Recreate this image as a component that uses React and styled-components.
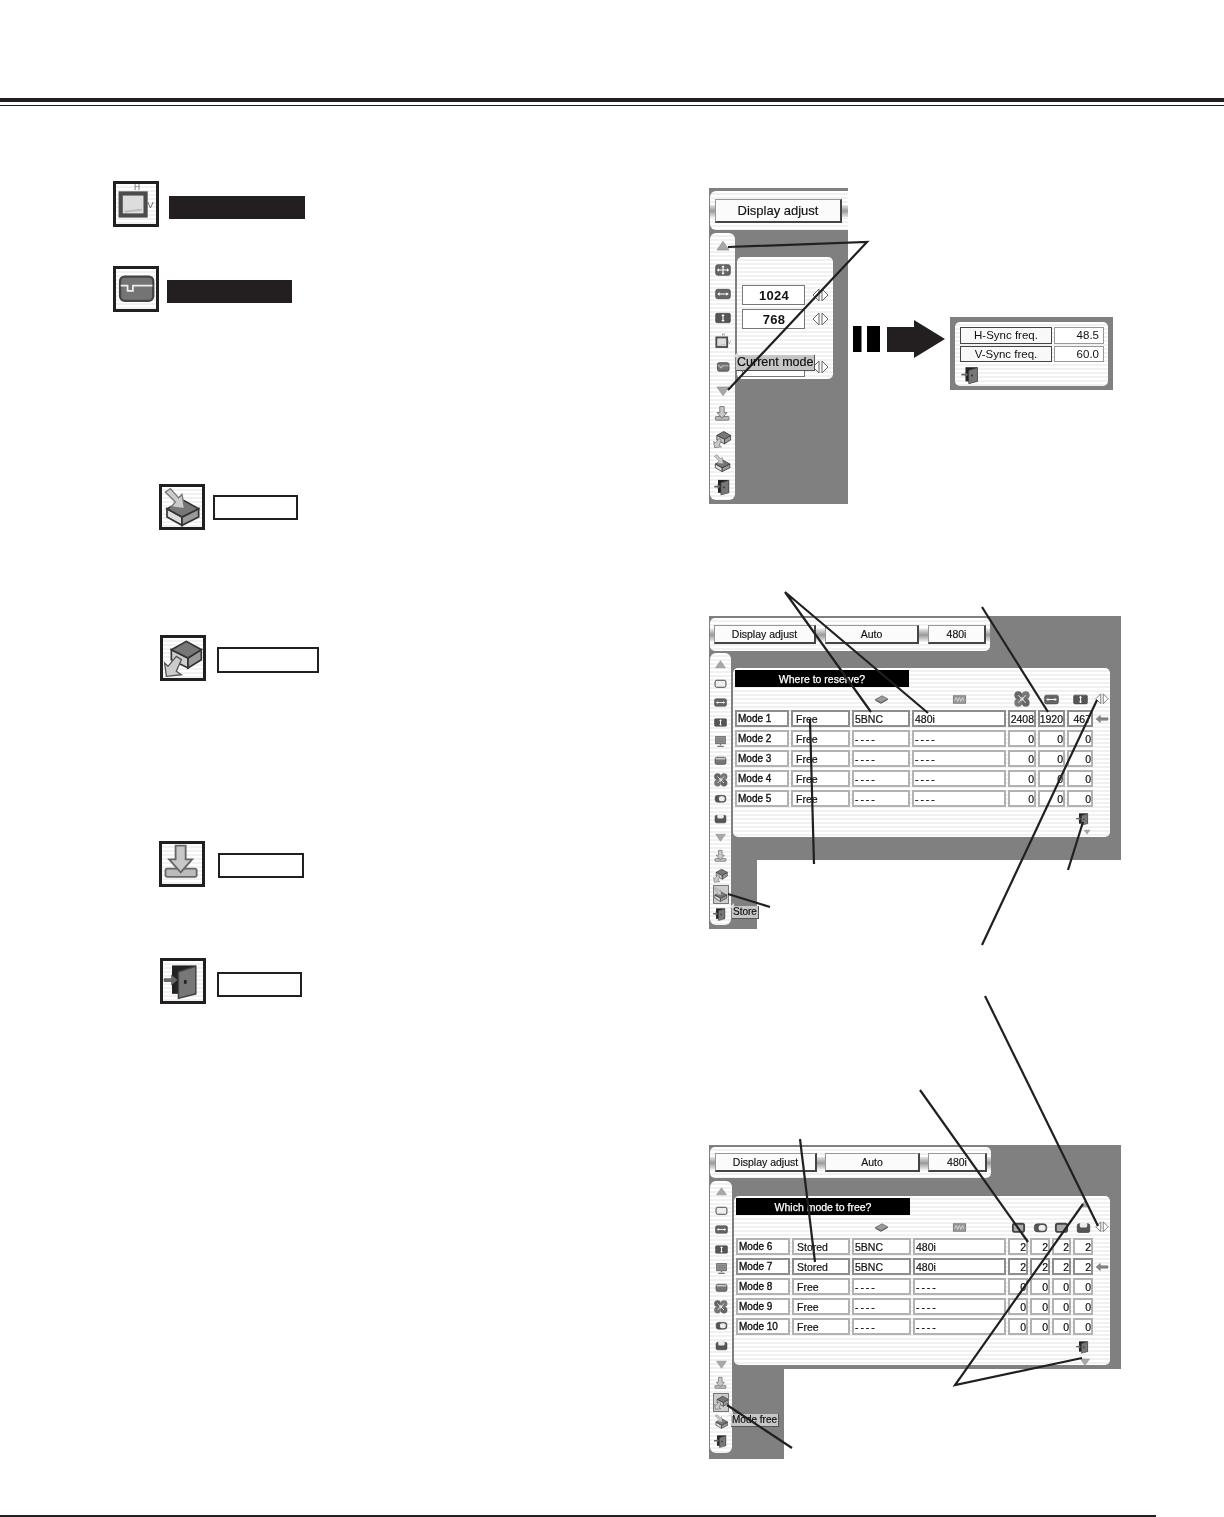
import React from "react";
import styled, { createGlobalStyle, css } from "styled-components";

const INK = "#231f20";
const GRAY = "#808080";

const stripes = css`
  background: repeating-linear-gradient(180deg, #fff 0 2px, #f1f1f1 2px 4px);
`;

const GlobalStyle = createGlobalStyle`
  html, body { margin: 0; padding: 0; background: #fff; }
  body { font-family: "Liberation Sans", Arial, sans-serif; color: #111; }
`;

function Glyph({ name }) {
  switch (name) {
    case "up":
      return <polygon points="12,5 21,18 3,18" fill="#a8a8a8" stroke="#8a8a8a" />;
    case "down":
      return <polygon points="3,6 21,6 12,19" fill="#a8a8a8" stroke="#8a8a8a" />;
    case "move":
      return (
        <>
          <rect x="1" y="4" width="22" height="16" rx="3" fill="#666" stroke="#444" />
          <path d="M4 12h16M12 6v12" stroke="#fff" strokeWidth="1.6" />
          <path d="M3 12l3-2.5v5zM21 12l-3-2.5v5zM12 5l-2.5 3h5zM12 19l-2.5-3h5z" fill="#fff" />
        </>
      );
    case "hsize":
      return (
        <>
          <rect x="1" y="5" width="22" height="14" rx="3" fill="#666" stroke="#444" />
          <path d="M5 12h14" stroke="#fff" strokeWidth="1.6" />
          <path d="M3.5 12l3.5-2.5v5zM20.5 12l-3.5-2.5v5z" fill="#fff" />
        </>
      );
    case "vsize":
      return (
        <>
          <rect x="1" y="5" width="22" height="14" rx="2" fill="#555" stroke="#444" />
          <path d="M12 8v8" stroke="#fff" strokeWidth="1.8" />
          <path d="M12 6l-2.6 3h5.2zM12 18l-2.6-3h5.2z" fill="#fff" />
        </>
      );
    case "hv":
      return (
        <>
          <rect x="4" y="6.5" width="13" height="11.5" fill="#ddd" stroke="#4c4c4c" strokeWidth="2.2" />
          <path d="M6 16l9-1" stroke="#bbb" />
          <text x="12.5" y="4.8" fontSize="4.4" textAnchor="middle" fill="#666" fontFamily="Liberation Sans">H</text>
          <text x="19.6" y="14" fontSize="5" textAnchor="middle" fill="#666" fontFamily="Liberation Sans">V</text>
        </>
      );
    case "sync":
      return (
        <>
          <rect x="3.7" y="5.5" width="17.3" height="12.7" rx="2.4" fill="#747474" stroke="#444" strokeWidth="1.2" />
          <path d="M4 10.2H7.6v2.8h2.8v-2.8H20.6" fill="none" stroke="#eee" strokeWidth="0.9" />
        </>
      );
    case "blank":
      return <rect x="2" y="6" width="20" height="13" rx="3" fill="#eee" stroke="#444" strokeWidth="1.8" />;
    case "band":
      return (
        <>
          <rect x="2" y="6" width="20" height="13" rx="3" fill="#777" stroke="#444" strokeWidth="1.4" />
          <rect x="3" y="7" width="18" height="3" fill="#ccc" />
        </>
      );
    case "screen":
      return <rect x="3" y="6" width="18" height="13" rx="3" fill="#aaa" stroke="#444" strokeWidth="3" />;
    case "monitor":
      return (
        <>
          <rect x="3" y="3" width="18" height="13" fill="#999" stroke="#666" strokeWidth="1.6" />
          <path d="M5 7h14M5 10h14M5 13h14" stroke="#666" />
          <path d="M12 16v3M6 21h12" stroke="#777" strokeWidth="2.4" />
        </>
      );
    case "clover":
      return (
        <>
          <circle cx="7" cy="7" r="5.2" fill="#666" />
          <circle cx="17" cy="7" r="5.2" fill="#777" />
          <circle cx="7" cy="17" r="5.2" fill="#777" />
          <circle cx="17" cy="17" r="5.2" fill="#666" />
          <path d="M7 7l10 10M17 7L7 17" stroke="#ddd" strokeWidth="1.4" />
        </>
      );
    case "half":
      return (
        <>
          <rect x="2" y="6" width="20" height="13" rx="5" fill="#555" stroke="#444" />
          <rect x="9" y="8" width="11" height="9" rx="4" fill="#eee" />
        </>
      );
    case "save":
      return (
        <>
          <rect x="2" y="6" width="20" height="14" rx="3" fill="#555" stroke="#333" />
          <rect x="6" y="4" width="12" height="8" rx="3" fill="#eee" />
        </>
      );
    case "reset":
      return (
        <>
          <rect x="3" y="14.5" width="17" height="4.5" rx="1" fill="#bbb" stroke="#666" strokeWidth="1" />
          <polygon points="8.5,2 14,2 14,9.5 17.5,9.5 11.3,16.5 5,9.5 8.5,9.5" fill="#c8c8c8" stroke="#666" strokeWidth="1" />
        </>
      );
    case "store":
      return (
        <>
          <polygon points="3,13 12,18 12,23 3,18" fill="#ddd" stroke="#333" />
          <polygon points="12,18 22,13 22,18 12,23" fill="#999" stroke="#333" />
          <polygon points="3,13 13,8 22,13 12,18" fill="#777" stroke="#333" />
          <polygon points="2,3 5,1 10,6.5 12,4.5 13.5,13 5.5,12 8,9" fill="#ccc" stroke="#777" strokeWidth="0.8" />
        </>
      );
    case "free":
      return (
        <>
          <polygon points="5,7 15,12 15,18 5,13" fill="#ccc" stroke="#333" />
          <polygon points="15,12 23,7 23,13 15,18" fill="#999" stroke="#333" />
          <polygon points="5,7 14,2 23,7 15,12" fill="#777" stroke="#333" />
          <polygon points="11,13 8,11 3,17 1,15 2,23 11,22 8,20" fill="#ccc" stroke="#555" strokeWidth="0.8" />
        </>
      );
    case "exit":
      return (
        <>
          <rect x="6" y="3.5" width="13" height="15.5" fill="#222" />
          <polygon points="9.5,7 19,4 19,19 9.5,21.5" fill="#777" stroke="#444" strokeWidth="0.8" />
          <rect x="12.5" y="11.5" width="1.5" height="2" fill="#222" />
          <polygon points="1.5,10.5 5.5,10.5 5.5,8.5 9,11.5 5.5,14.5 5.5,12.5 1.5,12.5" fill="#666" />
        </>
      );
    case "book":
      return (
        <>
          <polygon points="2,12 13,6 22,11 11,17" fill="#999" stroke="#555" />
          <path d="M2 13l9 5 11-6" fill="none" stroke="#555" strokeWidth="1.6" />
        </>
      );
    case "wave":
      return (
        <>
          <rect x="2" y="6" width="20" height="12" fill="#999" stroke="#666" />
          <path d="M4 14l3-5 2 6 3-6 2 6 3-6 2 5" fill="none" stroke="#eee" />
        </>
      );
    case "back":
      return <polygon points="2,12 9,6 9,10 22,10 22,14 9,14 9,18" fill="#888" stroke="#666" />;
    default:
      return null;
  }
}

const FILL_SCALE = { hv: 1.25, store: 1.15, free: 1.15, exit: 1.25, reset: 1.2, clover: 1.2 };

function Icon({ name, size = 14 }) {
  return (
    <IconSvg viewBox="0 0 24 24" $size={size}>
      <Glyph name={name} />
    </IconSvg>
  );
}

function LrArrows({ width = 17 }) {
  return (
    <LrSvg viewBox="0 0 17 14" $width={width}>
      <polygon points="7,1 1,7 7,13" />
      <polygon points="10,1 16,7 10,13" />
    </LrSvg>
  );
}

function Sidebar({ items, active, step, top, width, height, iconSize }) {
  return (
    <SideRail $width={width} $height={height} $top={top}>
      {items.map((name) => (
        <SideCell key={name} $step={step} $active={name === active}>
          <Icon name={name} size={iconSize * (FILL_SCALE[name] || 1)} />
        </SideCell>
      ))}
    </SideRail>
  );
}

function TabStrip({ tabs, height, fontSize, stretch }) {
  return (
    <Strip $height={height} $stretch={stretch}>
      <Stub $w={tabs[0].lead} />
      {tabs.map((t) => (
        <React.Fragment key={t.label}>
          <Tab $w={t.w} $h={t.h} $fontSize={fontSize}>{t.label}</Tab>
          <Stub $w={t.after} />
        </React.Fragment>
      ))}
    </Strip>
  );
}

function ModeTable({ title, columns, headIcons, rows, selected, topArrow, exitTri }) {
  return (
    <>
      <TitleRow>
        <TitleBar>{title}</TitleBar>
        {topArrow && <Icon name="up" size={12} />}
      </TitleRow>
      <Grid $columns={columns}>
        <HeadCell />
        <HeadCell />
        {headIcons.map((name, i) => (
          <HeadCell key={i}>
            <Icon name={name} size={15 * (FILL_SCALE[name] || 1)} />
          </HeadCell>
        ))}
        <HeadCell>
          <LrArrows width={14} />
        </HeadCell>
        {rows.map((row, r) => (
          <React.Fragment key={row.mode}>
            <Cell $on={r === selected}><ModeName>{row.mode}</ModeName></Cell>
            <Cell $on={r === selected} $pad={3}>{row.state}</Cell>
            <Cell $on={r === selected}>{row.input === "-" ? <Dash>- - - -</Dash> : row.input}</Cell>
            <Cell $on={r === selected}>{row.signal === "-" ? <Dash>- - - -</Dash> : row.signal}</Cell>
            {row.nums.map((n, i) => (
              <NumCell key={i} $on={r === selected}>{n}</NumCell>
            ))}
            <Marker>{r === selected && <Icon name="back" size={14} />}</Marker>
          </React.Fragment>
        ))}
      </Grid>
      <PanelFoot>
        <Icon name="exit" size={16} />
        <Icon name="down" size={exitTri} />
      </PanelFoot>
    </>
  );
}

const LEFT_ROWS = [
  { icon: "hv", size: 46, indent: 113, top: 75, gap: 10, labelTop: 15, w: 136, h: 23, filled: true },
  { icon: "sync", size: 46, indent: 113, top: 39, gap: 8, labelTop: 14, w: 125, h: 23, filled: true },
  { icon: "store", size: 40, indent: 159, top: 172, gap: 8, labelTop: 11, w: 85, h: 25 },
  { icon: "free", size: 40, indent: 160, top: 105, gap: 11, labelTop: 12, w: 102, h: 26 },
  { icon: "reset", size: 44, indent: 159, top: 160, gap: 13, labelTop: 12, w: 86, h: 25 },
  { icon: "exit", size: 44, indent: 160, top: 71, gap: 11, labelTop: 14, w: 85, h: 25 },
];

const FIG1_SIDE = ["up", "move", "hsize", "vsize", "hv", "sync", "down", "reset", "free", "store", "exit"];
const LONG_SIDE = ["up", "blank", "hsize", "vsize", "monitor", "band", "clover", "half", "save", "down", "reset", "free", "store", "exit"];

const FIG2_COLS = "54px 59px 58px 94px 28px 27px 26px 14px";
const FIG3_COLS = "54px 58px 59px 93px 20px 20px 19px 20px 14px";

const FIG2_ROWS = [
  { mode: "Mode 1", state: "Free", input: "5BNC", signal: "480i", nums: ["2408", "1920", "467"] },
  { mode: "Mode 2", state: "Free", input: "-", signal: "-", nums: ["0", "0", "0"] },
  { mode: "Mode 3", state: "Free", input: "-", signal: "-", nums: ["0", "0", "0"] },
  { mode: "Mode 4", state: "Free", input: "-", signal: "-", nums: ["0", "0", "0"] },
  { mode: "Mode 5", state: "Free", input: "-", signal: "-", nums: ["0", "0", "0"] },
];

const FIG3_ROWS = [
  { mode: "Mode 6", state: "Stored", input: "5BNC", signal: "480i", nums: ["2", "2", "2", "2"] },
  { mode: "Mode 7", state: "Stored", input: "5BNC", signal: "480i", nums: ["2", "2", "2", "2"] },
  { mode: "Mode 8", state: "Free", input: "-", signal: "-", nums: ["0", "0", "0", "0"] },
  { mode: "Mode 9", state: "Free", input: "-", signal: "-", nums: ["0", "0", "0", "0"] },
  { mode: "Mode 10", state: "Free", input: "-", signal: "-", nums: ["0", "0", "0", "0"] },
];

const LEADERS = [
  "M728 247L867 242L728 390",
  "M871 712L785 592L928 713",
  "M982 607L1048 712",
  "M814 864L810 720",
  "M1068 870L1083 822",
  "M770 907L728 894",
  "M982 945L1097 700",
  "M800 1139L815 1262",
  "M920 1090L1028 1242",
  "M985 996L1098 1226",
  "M1083 1204L955 1385L1082 1358",
  "M792 1448L727 1405",
];

export default function App() {
  return (
    <Page>
      <GlobalStyle />
      <ThickRule />
      <ThinRule />
      <Main>
        <LeftCol>
          {LEFT_ROWS.map((r) => (
            <LegendRow key={r.icon} $indent={r.indent} $top={r.top} $gap={r.gap}>
              <BigIcon>
                <Icon name={r.icon} size={r.size} />
              </BigIcon>
              <LegendLabel $top={r.labelTop} $w={r.w} $h={r.h} $filled={r.filled} />
            </LegendRow>
          ))}
        </LeftCol>

        <RightCol>
          <FigOneRow>
            <Screen $w={139}>
              <TopBand $pad="3px 0 3px 1px">
                <TabStrip
                  height={39}
                  fontSize={13}
                  stretch
                  tabs={[{ label: "Display adjust", w: 127, h: 24, lead: 5, after: 6 }]}
                />
              </TopBand>
              <Body>
                <SideCol $w={28}>
                  <Sidebar items={FIG1_SIDE} step={24.1} top={1} width={25} height={267} iconSize={16} />
                </SideCol>
                <MainCol>
                  <Canvas $w={111} $h={271}>
                    <SmallPanel>
                      <FieldRow>
                        <Field>1024</Field>
                        <LrArrows />
                      </FieldRow>
                      <FieldRow>
                        <Field>768</Field>
                        <LrArrows />
                      </FieldRow>
                      <FieldRow $low>
                        <Field />
                        <LrArrows />
                      </FieldRow>
                      <Tip $left={-1} $top={98} $fontSize={12.5}>Current mode</Tip>
                    </SmallPanel>
                  </Canvas>
                </MainCol>
              </Body>
            </Screen>

            <BlockArrow viewBox="0 0 92 38">
              <rect x="0" y="6" width="8.5" height="26" fill="#000" />
              <rect x="14" y="6" width="13" height="26" fill="#000" />
              <polygon points="34,7 61,7 61,0 92,19 61,38 61,32 34,32" fill={INK} />
            </BlockArrow>

            <Popup>
              <PopupInner>
                <PopupRow>
                  <PopupLabel>H-Sync freq.</PopupLabel>
                  <PopupValue>48.5</PopupValue>
                </PopupRow>
                <PopupRow>
                  <PopupLabel>V-Sync freq.</PopupLabel>
                  <PopupValue>60.0</PopupValue>
                </PopupRow>
                <Icon name="exit" size={22} />
              </PopupInner>
            </Popup>
          </FigOneRow>

          <FigGap $top={112}>
            <Screen $w={412}>
              <TopBand $pad="2px 0 2px 1px">
                <TabStrip
                  height={33}
                  fontSize={10.5}
                  tabs={[
                    { label: "Display adjust", w: 102, h: 19, lead: 4, after: 9 },
                    { label: "Auto", w: 94, h: 19, after: 9 },
                    { label: "480i", w: 58, h: 19, after: 4 },
                  ]}
                />
              </TopBand>
              <Body>
                <SideCol $w={24}>
                  <Sidebar items={LONG_SIDE} active="store" step={19.2} top={2} width={21} height={272} iconSize={13} />
                </SideCol>
                <MainCol>
                  <Canvas $w={388} $h={207}>
                    <Panel $w={377}>
                      <ModeTable
                        title="Where to reserve?"
                        columns={FIG2_COLS}
                        headIcons={["book", "wave", "clover", "hsize", "vsize"]}
                        rows={FIG2_ROWS}
                        selected={0}
                        exitTri={8}
                      />
                    </Panel>
                  </Canvas>
                  <Tail $w={24} $h={69}>
                    <Tip $left={-1} $top={46} $fontSize={10}>Store</Tip>
                  </Tail>
                </MainCol>
              </Body>
            </Screen>
          </FigGap>

          <FigGap $top={216}>
            <Screen $w={412}>
              <TopBand $pad="2px 0 3px 1px">
                <TabStrip
                  height={31}
                  fontSize={10.5}
                  tabs={[
                    { label: "Display adjust", w: 102, h: 19, lead: 5, after: 8 },
                    { label: "Auto", w: 95, h: 19, after: 8 },
                    { label: "480i", w: 59, h: 19, after: 4 },
                  ]}
                />
              </TopBand>
              <Body>
                <SideCol $w={25}>
                  <Sidebar items={LONG_SIDE} active="free" step={19.2} top={1} width={22} height={272} iconSize={13} />
                </SideCol>
                <MainCol>
                  <Canvas $w={387} $h={188}>
                    <Panel $w={376}>
                      <ModeTable
                        title="Which mode to free?"
                        columns={FIG3_COLS}
                        headIcons={["book", "wave", "screen", "half", "screen", "save"]}
                        rows={FIG3_ROWS}
                        selected={1}
                        topArrow
                        exitTri={12}
                      />
                    </Panel>
                  </Canvas>
                  <Tail $w={50} $h={90}>
                    <Tip $left={-3} $top={45} $fontSize={10}>Mode free</Tip>
                  </Tail>
                </MainCol>
              </Body>
            </Screen>
          </FigGap>
        </RightCol>
      </Main>
      <FootRule />

      <Leaders viewBox="0 0 1224 1517">
        {LEADERS.map((d) => (
          <path key={d} d={d} />
        ))}
      </Leaders>
    </Page>
  );
}

const Page = styled.div`
  position: relative;
  display: flex;
  flex-direction: column;
  width: 1224px;
  height: 1517px;
  overflow: hidden;
  background: #fff;
`;

const ThickRule = styled.div`
  flex: none;
  height: 4px;
  margin-top: 98px;
  background: ${INK};
`;

const ThinRule = styled.div`
  flex: none;
  height: 1px;
  margin-top: 3px;
  background: ${INK};
`;

const FootRule = styled.div`
  flex: none;
  width: 1156px;
  height: 2px;
  background: ${INK};
`;

const Main = styled.main`
  flex: 1;
  display: flex;
`;

const LeftCol = styled.section`
  flex: none;
  width: 709px;
`;

const LegendRow = styled.div`
  display: flex;
  align-items: flex-start;
  gap: ${(p) => p.$gap}px;
  margin-top: ${(p) => p.$top}px;
  padding-left: ${(p) => p.$indent}px;
`;

const BigIcon = styled.div`
  ${stripes}
  flex: none;
  display: flex;
  align-items: center;
  justify-content: center;
  box-sizing: border-box;
  width: 46px;
  height: 46px;
  border: 3px solid ${INK};

  svg {
    filter: blur(0.4px);
  }
`;

const LegendLabel = styled.div`
  flex: none;
  box-sizing: border-box;
  width: ${(p) => p.$w}px;
  height: ${(p) => p.$h}px;
  margin-top: ${(p) => p.$top}px;
  border: 2px solid ${INK};
  background: ${(p) => (p.$filled ? INK : "#fff")};
`;

const RightCol = styled.section`
  flex: 1;
  min-width: 0;
`;

const FigOneRow = styled.div`
  display: flex;
  align-items: flex-start;
  margin-top: 82px;
`;

const FigGap = styled.div`
  margin-top: ${(p) => p.$top}px;
`;

const Screen = styled.div`
  flex: none;
  width: ${(p) => p.$w}px;
  filter: blur(0.35px);
`;

const TopBand = styled.div`
  padding: ${(p) => p.$pad};
  background: ${GRAY};
`;

const Strip = styled.div`
  ${stripes}
  display: flex;
  align-items: center;
  width: ${(p) => (p.$stretch ? "100%" : "fit-content")};
  height: ${(p) => p.$height}px;
  border-radius: ${(p) => (p.$stretch ? "6px 0 0 6px" : "5px")};
`;

const Stub = styled.div`
  flex: none;
  width: ${(p) => p.$w || 0}px;
  height: 12px;
  background: linear-gradient(180deg, #e4e4e4, #999 50%, #e4e4e4);
`;

const Tab = styled.div`
  flex: none;
  box-sizing: border-box;
  display: flex;
  align-items: center;
  justify-content: center;
  width: ${(p) => p.$w}px;
  height: ${(p) => p.$h}px;
  background: #fbfbfb;
  border: 1px solid #999;
  border-right: 2px solid #444;
  border-bottom: 2px solid #444;
  font-size: ${(p) => p.$fontSize}px;
  -webkit-text-stroke: 0.15px #111;
  color: #111;
`;

const Body = styled.div`
  display: flex;
`;

const SideCol = styled.div`
  flex: none;
  width: ${(p) => p.$w}px;
  box-sizing: border-box;
  padding-left: 1px;
  background: ${GRAY};
`;

const SideRail = styled.div`
  ${stripes}
  box-sizing: border-box;
  display: flex;
  flex-direction: column;
  align-items: center;
  width: ${(p) => p.$width}px;
  height: ${(p) => p.$height}px;
  padding-top: ${(p) => p.$top}px;
  border-radius: 6px;
`;

const SideCell = styled.div`
  flex: none;
  display: flex;
  align-items: center;
  justify-content: center;
  box-sizing: border-box;
  width: ${(p) => (p.$active ? "16px" : "100%")};
  height: ${(p) => p.$step}px;
  ${(p) => p.$active && "border: 1px solid #777; background: #ccc;"}
`;

const MainCol = styled.div`
  flex: none;
  min-width: 0;
`;

const Canvas = styled.div`
  width: ${(p) => p.$w}px;
  height: ${(p) => p.$h}px;
  padding-top: ${(p) => (p.$h > 250 ? 24 : 15)}px;
  box-sizing: border-box;
  background: ${GRAY};
`;

const Tail = styled.div`
  position: relative;
  width: ${(p) => p.$w}px;
  height: ${(p) => p.$h}px;
  background: ${GRAY};
`;

const SmallPanel = styled.div`
  ${stripes}
  position: relative;
  box-sizing: border-box;
  width: 96px;
  height: 122px;
  padding: 28px 0 0 5px;
  border-radius: 5px;
`;

const FieldRow = styled.div`
  display: flex;
  align-items: center;
  gap: 7px;
  margin-top: ${(p) => (p.$low ? 28 : 0)}px;
  margin-bottom: 4px;
`;

const Field = styled.div`
  box-sizing: border-box;
  display: flex;
  align-items: center;
  justify-content: center;
  width: 63px;
  height: 20px;
  padding-left: 1px;
  background: #fff;
  border: 1px solid #777;
  font-size: 13px;
  font-weight: 700;
  letter-spacing: 0.3px;
`;

const Tip = styled.div`
  position: absolute;
  left: ${(p) => p.$left}px;
  top: ${(p) => p.$top}px;
  z-index: 1;
  padding: 0 1px;
  background: #c6c6c6;
  border-right: 1px solid #555;
  border-bottom: 1px solid #555;
  font-size: ${(p) => p.$fontSize}px;
  line-height: ${(p) => p.$fontSize + 2}px;
  -webkit-text-stroke: 0.2px #111;
  white-space: nowrap;
  color: #111;

  &::before {
    content: "";
    position: absolute;
    left: -3px;
    top: -3px;
    border-top: 5px solid transparent;
    border-right: 5px solid #ddd;
  }
`;

const BlockArrow = styled.svg`
  flex: none;
  width: 92px;
  height: 38px;
  margin: 132px 0 0 5px;
`;

const Popup = styled.div`
  flex: none;
  box-sizing: border-box;
  width: 163px;
  height: 73px;
  margin: 129px 0 0 5px;
  padding: 5px;
  background: ${GRAY};
  filter: blur(0.35px);
`;

const PopupInner = styled.div`
  ${stripes}
  box-sizing: border-box;
  display: flex;
  flex-direction: column;
  gap: 2px;
  height: 64px;
  padding: 5px 4px 0 5px;
  border-radius: 5px;
`;

const PopupRow = styled.div`
  display: flex;
  gap: 2px;
  height: 17px;
`;

const PopupLabel = styled.div`
  box-sizing: border-box;
  display: flex;
  align-items: center;
  justify-content: center;
  width: 92px;
  background: #f8f8f8;
  border: 1px solid #444;
  font-size: 11.5px;
`;

const PopupValue = styled.div`
  box-sizing: border-box;
  display: flex;
  align-items: center;
  justify-content: flex-end;
  width: 50px;
  padding-right: 4px;
  background: #fff;
  border: 1px solid #999;
  font-size: 11.5px;
`;

const Panel = styled.div`
  ${stripes}
  box-sizing: border-box;
  width: ${(p) => p.$w}px;
  height: 169px;
  padding: 2px 0 0 2px;
  border-radius: 5px;
`;

const TitleRow = styled.div`
  display: flex;
  align-items: flex-start;
  justify-content: space-between;
  padding-right: 19px;
  height: 17px;
`;

const TitleBar = styled.div`
  display: flex;
  align-items: center;
  justify-content: center;
  width: 174px;
  height: 17px;
  background: #000;
  color: #fff;
  font-size: 10.5px;
  -webkit-text-stroke: 0.25px #fff;
`;

const Grid = styled.div`
  display: grid;
  grid-template-columns: ${(p) => p.$columns};
  grid-template-rows: 20px repeat(5, 17px);
  column-gap: 2px;
  row-gap: 3px;
  margin-bottom: 4px;
`;

const HeadCell = styled.div`
  display: flex;
  align-items: center;
  justify-content: center;
  padding-top: 4px;
`;

const Cell = styled.div`
  box-sizing: border-box;
  display: flex;
  align-items: center;
  padding-left: ${(p) => p.$pad || 1}px;
  background: #fff;
  border: 2px solid ${(p) => (p.$on ? "#8e8e8e" : "#b2b2b2")};
  font-size: 10.5px;
  -webkit-text-stroke: 0.2px #111;
  white-space: nowrap;
  overflow: hidden;
`;

const NumCell = styled(Cell)`
  justify-content: flex-end;
  padding-left: 0;
  padding-right: 0;
`;

const ModeName = styled.span`
  font-size: 10px;
  -webkit-text-stroke: 0.35px #111;
`;

const Dash = styled.span`
  word-spacing: -1px;
`;

const Marker = styled.div`
  display: flex;
  align-items: center;
  justify-content: center;
`;

const PanelFoot = styled.div`
  display: flex;
  flex-direction: column;
  align-items: flex-end;
  gap: 1px;
  padding-right: 19px;
`;

const IconSvg = styled.svg`
  display: block;
  flex: none;
  width: ${(p) => p.$size}px;
  height: ${(p) => p.$size}px;
`;

const LrSvg = styled.svg`
  display: block;
  flex: none;
  width: ${(p) => p.$width}px;
  height: ${(p) => (p.$width * 14) / 17}px;

  polygon {
    fill: #fff;
    stroke: #666;
    stroke-width: 1;
  }
`;

const Leaders = styled.svg`
  position: absolute;
  left: 0;
  top: 0;
  z-index: 2;
  width: 1224px;
  height: 1517px;
  pointer-events: none;

  path {
    fill: none;
    stroke: ${INK};
    stroke-width: 2.2;
  }
`;
